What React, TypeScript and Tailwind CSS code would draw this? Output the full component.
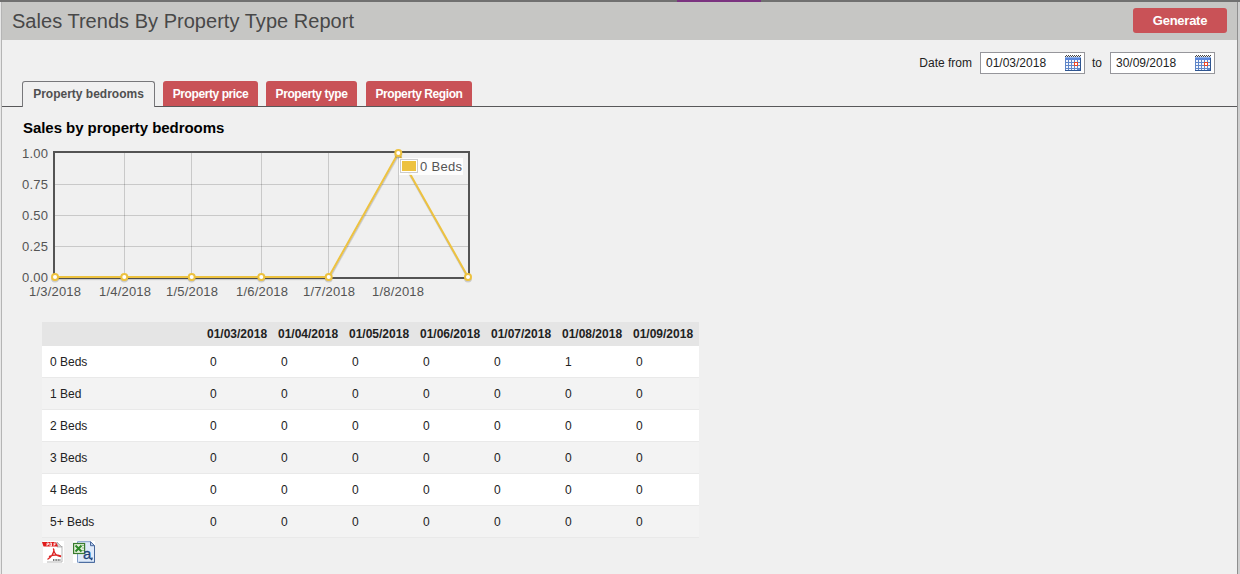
const months = ['01/03/2018', '01/04/2018', '01/05/2018', '01/06/2018', '01/07/2018', '01/08/2018', '01/09/2018'];

const rows: { label: string; values: number[] }[] = [
  { label: '0 Beds', values: [0, 0, 0, 0, 0, 1, 0] },
  { label: '1 Bed', values: [0, 0, 0, 0, 0, 0, 0] },
  { label: '2 Beds', values: [0, 0, 0, 0, 0, 0, 0] },
  { label: '3 Beds', values: [0, 0, 0, 0, 0, 0, 0] },
  { label: '4 Beds', values: [0, 0, 0, 0, 0, 0, 0] },
  { label: '5+ Beds', values: [0, 0, 0, 0, 0, 0, 0] },
];

const points: [number, number][] = [
  [55, 137], [124.3, 137], [191.7, 137], [261.3, 137], [328.7, 137], [398.3, 13], [468, 137],
];
const line = points.map((p) => p.join(',')).join(' ');
const gridX = [124.5, 191.5, 261.5, 328.5, 398.5];
const gridY = [44.5, 75.5, 106.5];
const yLabels: [string, number][] = [['1.00', 18], ['0.75', 49], ['0.50', 80], ['0.25', 111], ['0.00', 142]];
const xLabels: [string, number][] = [
  ['1/3/2018', 55], ['1/4/2018', 125], ['1/5/2018', 192], ['1/6/2018', 262], ['1/7/2018', 329], ['1/8/2018', 398],
];

function CalendarIcon() {
  return (
    <svg width="16" height="16" viewBox="0 0 16 16" shapeRendering="crispEdges">
      <rect x="0" y="1" width="16" height="15" fill="#5f86c8" />
      <rect x="0" y="1" width="16" height="1" fill="#e4e8f0" />
      <rect x="0" y="2" width="16" height="1" fill="#8fb2ee" />
      <rect x="0" y="3" width="16" height="2" fill="#5b87dc" />
      <path d="M1 0h1v1h-1zM3 0h1v1h-1zM5 0h1v1h-1zM7 0h1v1h-1zM9 0h1v1h-1zM11 0h1v1h-1zM13 0h1v1h-1zM15 0h1v1h-1zM0 1h1v1h-1zM2 1h1v1h-1zM4 1h1v1h-1zM6 1h1v1h-1zM8 1h1v1h-1zM10 1h1v1h-1zM12 1h1v1h-1zM14 1h1v1h-1z" fill="#444" />
      <path d="M1 5h2v2h-2zM4 5h2v2h-2zM7 5h2v2h-2zM10 5h2v2h-2zM13 5h2v2h-2zM1 8h2v2h-2zM4 8h2v2h-2zM7 8h2v2h-2zM10 8h2v2h-2zM13 8h2v2h-2zM1 11h2v2h-2zM4 11h2v2h-2zM7 11h2v2h-2zM10 11h2v2h-2zM13 11h2v2h-2zM1 14h2v1h-2zM4 14h2v1h-2zM7 14h2v1h-2zM10 14h2v1h-2z" fill="#f3f6fc" />
      <path d="M15 3h1v13h-16v-1h15z" fill="#2f5590" />
      <rect x="9" y="7" width="4" height="4" fill="#ee4523" />
      <rect x="10" y="8" width="2" height="2" fill="#fff" />
    </svg>
  );
}

function DateField({ value }: { value: string }) {
  return (
    <div className="flex h-[22px] w-[105px] items-center justify-between border border-[#96969b] bg-white pl-[5px] pr-[3px]">
      <span>{value}</span>
      <CalendarIcon />
    </div>
  );
}

function Tab({ label, className }: { label: string; className: string }) {
  return (
    <button className={`flex h-[25px] items-center justify-center rounded-t-[3px] bg-[#c95257] text-xs font-bold text-white ${className}`}>
      <span className="tracking-[-0.42px]">{label}</span>
    </button>
  );
}

function Chart() {
  return (
    <svg className="block" width="480" height="162" viewBox="0 0 480 162" fontFamily="'Liberation Sans', sans-serif" fontSize="13" fill="#545454">
      <g stroke="#000" strokeOpacity="0.16" strokeWidth="1">
        {gridX.map((x) => <line key={x} x1={x} x2={x} y1="13" y2="137" />)}
        {gridY.map((y) => <line key={y} x1="55" x2="468" y1={y} y2={y} />)}
      </g>
      <rect x="54" y="12" width="415" height="126" fill="none" stroke="#545454" strokeWidth="2" />
      <g fill="none" stroke="#000" strokeLinejoin="round">
        <polyline points={line} strokeOpacity="0.1" strokeWidth="1.5" transform="translate(.4 2.6)" />
        <polyline points={line} strokeOpacity="0.1" strokeWidth="1" transform="translate(.3 2)" />
      </g>
      <polyline points={line} fill="none" stroke="#edc240" strokeWidth="2" strokeLinejoin="round" />
      {points.map(([x, y]) => (
        <g key={x}>
          <path d={`M${x - 3} ${y + 1.5}a3 3 0 0 0 6 0`} fill="none" stroke="#000" strokeOpacity="0.15" strokeWidth="2" />
          <circle cx={x} cy={y} r="3" fill="#fff" stroke="#edc240" strokeWidth="2" />
        </g>
      ))}
      <rect x="399" y="18" width="64" height="17" fill="#fff" fillOpacity="0.85" />
      <rect x="400.5" y="19.5" width="17" height="13" fill="#fff" stroke="#ccc" />
      <rect x="402" y="21" width="14" height="10" fill="#edc240" />
      <text x="420" y="31" textLength="42">0 Beds</text>
      {yLabels.map(([t, y]) => <text key={t} x="22" y={y} textLength="26">{t}</text>)}
      {xLabels.map(([t, x]) => <text key={t} x={x} y="156" textAnchor="middle" textLength="52">{t}</text>)}
    </svg>
  );
}

function PdfIcon() {
  return (
    <svg width="22" height="22" viewBox="0 0 22 22">
      <path d="M1 0h21v22H1z" fill="#fff" />
      <path d="M20 5v16H5" fill="none" stroke="#b7b7b7" />
      <path d="M15 1v5h5z" fill="#d4d4d4" stroke="#999" strokeWidth=".6" />
      <path d="M0 1h14l2 4.500H1.500z" fill="#e01b1b" />
      <path d="M5 5V2h1.500v1.500H5M8 2v3h1.500V2zM12 5V2h2M12 3.500h1.500" fill="none" stroke="#fff" strokeWidth=".8" />
      <path d="M11.500 8c.5 4 3 7 7 7.500M12 9c-.5 4-3 7-6 9M7.500 15.500c3-1.500 7-2 11-.5" fill="none" stroke="#dc2525" strokeWidth="1.400" strokeLinecap="round" />
      <path d="M11 19h8" stroke="#777" strokeWidth="2" strokeDasharray="1 .6" />
    </svg>
  );
}

function ExcelIcon() {
  return (
    <svg width="22" height="22" viewBox="0 0 22 22">
      <path d="M0 0h22v22H0z" fill="#fff" />
      <path d="M4.500.7h13l4 4v16.600h-17z" fill="#dfeafa" stroke="#7f9cc8" />
      <path d="M17.500.7v4h4z" fill="#bfd2f0" stroke="#46669b" />
      <path d="M21.500 5v16.400H6" fill="none" stroke="#46669b" />
      <rect x=".6" y="2.500" width="11" height="10" fill="#e5f1dd" stroke="#397b2e" strokeWidth="1.200" />
      <path d="M2.500 4.500l6 6M8.500 4.500l-6 6" stroke="#2c8928" strokeWidth="2" />
      <path d="M9 4.500h2M9 7h2M9 9.500h2" stroke="#79a96e" strokeWidth=".8" />
      <text x="10" y="18" fontFamily="'Liberation Sans', sans-serif" fontSize="15" stroke="#1e4478" strokeWidth=".3" fill="#1e4478">a</text>
      <path d="M19 16.500v1.500l-1 1" fill="none" stroke="#1e4478" strokeWidth="1.300" />
    </svg>
  );
}

export default function App() {
  return (
    <div className="flex h-[574px] w-[1240px] flex-col overflow-hidden bg-[#e8e8e8] font-['Liberation_Sans',sans-serif] text-xs text-[#222]">
      <div className="flex h-[2px] shrink-0 bg-[#707070] pl-[677px]">
        <div className="h-full w-[84px] bg-[#7b3380]" />
      </div>
      <div className="flex min-h-0 grow pl-px">
        <main className="flex w-[1237px] shrink-0 flex-col border-x border-l-[#b5b5b5] border-r-[#8e8e8e] bg-[#f0f0f0]">
          <header className="flex h-[38px] shrink-0 items-center justify-between bg-[#c6c6c4] pl-[10px] pr-[10px]">
            <h1 className="text-[20px] leading-[38px] tracking-[0.03px] text-[#484848]">Sales Trends By Property Type Report</h1>
            <button className="mb-px flex h-[25px] w-[94px] items-center justify-center rounded-[3px] bg-[#c95257] text-[13px] font-bold tracking-[-0.25px] text-white">Generate</button>
          </header>
          <div className="mt-3 flex h-[22px] shrink-0 items-center justify-end pr-[22px]">
            <span className="mr-2">Date from</span>
            <DateField value="01/03/2018" />
            <span className="ml-[7px] mr-[9px] w-[9px]">to</span>
            <DateField value="30/09/2018" />
          </div>
          <nav className="mt-[7px] flex h-[26px] shrink-0">
            <div className="w-5 border-b border-[#58585a]" />
            <button className="flex h-[26px] w-[133px] items-center justify-center rounded-t-[3px] border border-b-0 border-[#77777a] pb-px text-xs font-bold text-[#505050]">
              Property bedrooms
            </button>
            <div className="flex grow border-b border-[#58585a] pl-2">
              <Tab label="Property price" className="w-[95px]" />
              <Tab label="Property type" className="ml-2 w-[91px]" />
              <Tab label="Property Region" className="ml-[9px] w-[106px]" />
            </div>
          </nav>
          <h2 className="mt-[11px] h-[20px] shrink-0 pl-[21px] text-[15px] font-bold leading-[20px] tracking-[-0.05px] text-black">Sales by property bedrooms</h2>
          <div className="-ml-[2px] mt-[2px] h-[162px] shrink-0">
            <Chart />
          </div>
          <table className="ml-10 mt-5 w-[657px] shrink-0 table-fixed border-separate border-spacing-0">
            <colgroup>
              <col className="w-[160px]" />
              {months.map((m) => <col key={m} className="w-[71px]" />)}
            </colgroup>
            <thead>
              <tr className="h-6 bg-[#e5e5e5]">
                <th />
                {months.map((m) => <th key={m} className="p-0 pl-[5px] text-left font-bold">{m}</th>)}
              </tr>
            </thead>
            <tbody>
              {rows.map((r) => (
                <tr key={r.label} className="h-8 odd:bg-white even:bg-[#f3f3f3]">
                  <td className="border-b border-[#e9e9e9] p-0 pl-2">{r.label}</td>
                  {r.values.map((v, i) => <td key={i} className="border-b border-[#e9e9e9] p-0 pl-2">{v}</td>)}
                </tr>
              ))}
            </tbody>
          </table>
          <div className="ml-10 mt-[3px] flex gap-[9px]">
            <PdfIcon />
            <ExcelIcon />
          </div>
        </main>
        <div className="grow bg-[#cfcfcf]" />
      </div>
    </div>
  );
}
